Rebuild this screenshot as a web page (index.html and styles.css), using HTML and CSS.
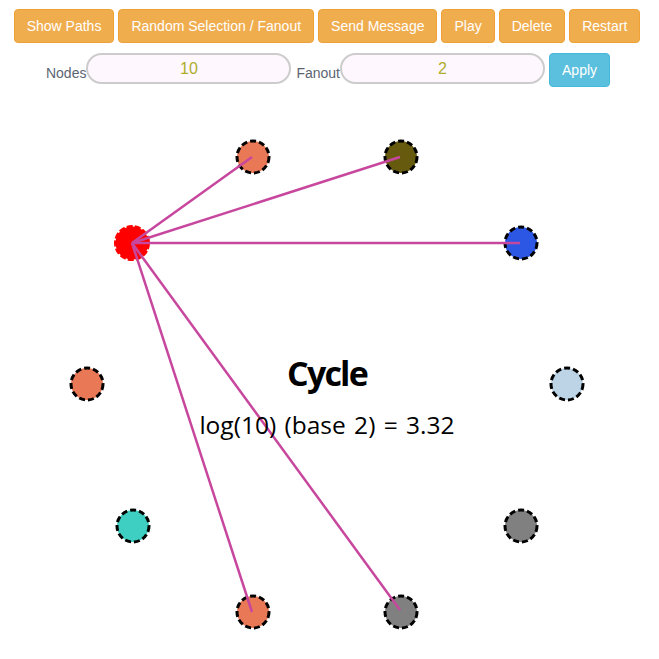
FILE: index.html
```html
<!DOCTYPE html>
<html>
<head>
<meta charset="utf-8">
<link rel="stylesheet" href="styles.css">
</head>
<body>
<div class="toolbar">
  <button class="btn btn-warning">Show Paths</button>
  <button class="btn btn-warning">Random Selection / Fanout</button>
  <button class="btn btn-warning">Send Message</button>
  <button class="btn btn-warning">Play</button>
  <button class="btn btn-warning">Delete</button>
  <button class="btn btn-warning">Restart</button>
</div>
<div class="controls">
  <label class="lbl">Nodes</label><input class="field" type="text" value="10">
  <label class="lbl lbl-fan">Fanout</label><input class="field" type="text" value="2">
  <button class="btn btn-info">Apply</button>
</div>
<svg class="graph" viewBox="8 95 643 550" width="643" height="550">
  <g class="nodes">
    <circle cx="567" cy="384" r="16" fill="#bcd4e6"/>
    <circle cx="521" cy="526" r="16" fill="#808080"/>
    <circle cx="401" cy="612" r="16" fill="#808080"/>
    <circle cx="253" cy="612" r="16" fill="#e97856"/>
    <circle cx="133" cy="526" r="16" fill="#3ecfc2"/>
    <circle cx="87" cy="384" r="16" fill="#e97856"/>
    <circle cx="253" cy="157" r="16" fill="#e97856"/>
    <circle cx="401" cy="157" r="16" fill="#665a0e"/>
    <circle cx="521" cy="243" r="16" fill="#2c56e4"/>
  </g>
  <circle class="self" cx="132" cy="243" r="16.5"/>
  <g class="edges">
    <line x1="132" y1="243" x2="252" y2="157"/>
    <line x1="132" y1="243" x2="400" y2="157"/>
    <line x1="132" y1="243" x2="520" y2="243"/>
    <line x1="132" y1="243" x2="252" y2="612"/>
    <line x1="132" y1="243" x2="400" y2="610"/>
  </g>
  <text class="title" x="327" y="386">Cycle</text>
  <text class="formula" x="327" y="434">log(10) (base 2) = 3.32</text>
</svg>
</body>
</html>
```
FILE: styles.css
```css
html, body {
  margin: 0;
  padding: 0;
  background: #fff;
  overflow: hidden;
}
body {
  padding: 9px 8px 0 8px;
  font-family: "Liberation Sans", Arial, sans-serif;
  font-size: 14px;
}
.toolbar {
  display: flex;
  justify-content: center;
  gap: 4px;
  padding-right: 5px;
  height: 34px;
}
.btn {
  box-sizing: border-box;
  height: 34px;
  padding: 6px 12px;
  font-family: "Liberation Sans", Arial, sans-serif;
  font-size: 14px;
  line-height: 20px;
  color: #fff;
  border: 1px solid;
  border-radius: 4px;
  cursor: pointer;
  white-space: nowrap;
}
.btn-warning {
  background: #f0ad4e;
  border-color: #eea236;
}
.btn-info {
  background: #5bc0de;
  border-color: #46b8da;
}
.controls {
  display: flex;
  justify-content: center;
  align-items: flex-start;
  margin-top: 10px;
  padding-right: 3px;
  height: 34px;
}
.lbl {
  color: #5b6472;
  font-size: 14px;
  line-height: 20px;
  margin-top: 10px;
}
.lbl-fan {
  margin-left: 5px;
}
.field {
  box-sizing: border-box;
  width: 205px;
  height: 31px;
  border: 2px solid #cccccc;
  border-radius: 16px;
  background: #fef8fe;
  color: #aeae2c;
  font-family: "Liberation Sans", Arial, sans-serif;
  font-size: 16px;
  text-align: center;
  padding: 0 10px;
  outline: none;
}
.controls .btn-info {
  margin-left: 4px;
}
.graph {
  display: block;
  margin-top: 8px;
}
.nodes circle {
  stroke: #000;
  stroke-width: 3;
  stroke-dasharray: 6 3;
}
.self {
  fill: #ff0000;
  stroke: #ff0000;
  stroke-width: 3;
  stroke-dasharray: 6 2;
}
.edges line {
  stroke: #c8479e;
  stroke-width: 2.5;
}
.title {
  font-family: "Open Sans", "DejaVu Sans", sans-serif;
  font-weight: 700;
  font-size: 34px;
  letter-spacing: -1.8px;
  text-anchor: middle;
  fill: #000;
}
.formula {
  font-family: "Open Sans", "DejaVu Sans", sans-serif;
  font-size: 24.5px;
  word-spacing: 2px;
  text-anchor: middle;
  fill: #000;
}
```
